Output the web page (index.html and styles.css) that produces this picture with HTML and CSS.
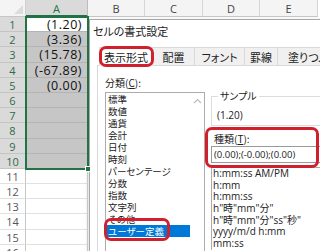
FILE: index.html
```html
<!DOCTYPE html>
<html lang="ja">
<head>
  <meta charset="UTF-8" />
  <title>セルの書式設定</title>
  <link rel="stylesheet" href="styles.css">
</head>
<body>
  <!-- worksheet behind the dialog -->
  <div class="sheet">
    <div class="col heads">
      <div class="corner"></div>
      <div class="rowhead sel">1</div>
      <div class="rowhead sel">2</div>
      <div class="rowhead sel">3</div>
      <div class="rowhead sel">4</div>
      <div class="rowhead sel">5</div>
      <div class="rowhead sel">6</div>
      <div class="rowhead sel">7</div>
      <div class="rowhead sel">8</div>
      <div class="rowhead sel">9</div>
      <div class="rowhead sel">10</div>
      <div class="rowhead">11</div>
      <div class="rowhead">12</div>
      <div class="rowhead">13</div>
      <div class="rowhead">14</div>
      <div class="rowhead">15</div>
      <div class="rowhead">16</div>
    </div>

    <div class="col col-a">
      <div class="colhead sel">A</div>
      <div class="selection">
        <div class="cell active">(1.20)</div>
        <div class="cell">(3.36)</div>
        <div class="cell">(15.78)</div>
        <div class="cell">(-67.89)</div>
        <div class="cell">(0.00)</div>
        <div class="cell"></div>
        <div class="cell"></div>
        <div class="cell"></div>
        <div class="cell"></div>
        <div class="cell"></div>
        <span class="handle"></span>
      </div>
      <div class="cell plain"></div>
      <div class="cell plain"></div>
      <div class="cell plain"></div>
      <div class="cell plain"></div>
      <div class="cell plain"></div>
      <div class="cell plain"></div>
    </div>

    <div class="col col-rest">
      <div class="colheads">
        <div class="colhead w57">B</div>
        <div class="colhead w58">C</div>
        <div class="colhead w57">D</div>
        <div class="colhead w58">E</div>
      </div>
    </div>
  </div>

  <!-- format cells dialog -->
  <div class="dialog">
    <div class="dlg-title">セルの書式設定</div>

    <div class="tabs">
      <div class="tab tab-format active">表示形式</div>
      <div class="tab tab-align">配置</div>
      <div class="tab tab-font">フォント</div>
      <div class="tab tab-border">罫線</div>
      <div class="tab tab-fill">塗りつぶし</div>
    </div>

    <div class="panel">
      <div class="left">
        <div class="label">分類(<u>C</u>):</div>
        <div class="listbox">
          <ul class="categories">
            <li>標準</li>
            <li>数値</li>
            <li>通貨</li>
            <li>会計</li>
            <li>日付</li>
            <li>時刻</li>
            <li>パーセンテージ</li>
            <li>分数</li>
            <li>指数</li>
            <li>文字列</li>
            <li>その他</li>
            <li class="selected">ユーザー定義</li>
          </ul>
          <div class="scrollbar">
            <svg width="9" height="6" viewBox="0 0 9 6"><path d="M1 5 L4.5 1.5 L8 5" fill="none" stroke="#bdbdbd" stroke-width="1.2"/></svg>
          </div>
        </div>
      </div>

      <div class="right">
        <fieldset class="sample">
          <legend>サンプル</legend>
          <div class="sample-value">(1.20)</div>
        </fieldset>
        <div class="label type-label">種類(<u>T</u>):</div>
        <div class="type-input">(0.00);(-0.00);(0.00)</div>
        <ul class="formats">
          <li>h:mm:ss AM/PM</li>
          <li>h:mm</li>
          <li>h:mm:ss</li>
          <li>h"時"mm"分"</li>
          <li>h"時"mm"分"ss"秒"</li>
          <li>yyyy/m/d h:mm</li>
          <li>mm:ss</li>
        </ul>
      </div>
    </div>
  </div>

  <!-- red annotation rings -->
  <div class="ring ring-tab"></div>
  <div class="ring ring-type"></div>
  <div class="ring ring-user"></div>
</body>
</html>
```

FILE: styles.css
```css
* {
  box-sizing: border-box;
  margin: 0;
  padding: 0;
}

body {
  width: 320px;
  height: 251px;
  overflow: hidden;
  position: relative;
  background: #fff;
  font-family: "Noto Sans CJK JP", sans-serif;
  color: #222;
}

/* ---------- worksheet ---------- */

.sheet {
  display: flex;
  font-family: "Open Sans", "Noto Sans CJK JP", sans-serif;
}

.col {
  display: flex;
  flex-direction: column;
  flex-shrink: 0;
}

.heads {
  width: 26px;
}

.col-a {
  width: 62px;
}

.col-rest {
  flex: 1;
  min-width: 0;
  overflow: hidden;
}

.colheads {
  display: flex;
}

.corner {
  height: 17px;
  background: #f4f4f4;
  border-right: 1px solid #d0d0d0;
  border-bottom: 1px solid #c6c6c6;
  position: relative;
}

.corner::after {
  content: "";
  position: absolute;
  right: 2px;
  bottom: 2px;
  border-left: 9px solid transparent;
  border-bottom: 9px solid #dcdcdc;
}

.colhead {
  height: 17px;
  line-height: 17px;
  text-align: center;
  font-size: 11px;
  color: #444;
  background: #f4f4f4;
  border-right: 1px solid #d6d6d6;
  border-bottom: 1px solid #c6c6c6;
  flex-shrink: 0;
}

.colhead.sel {
  background: #dadada;
  color: #217346;
  border-bottom: 2px solid #217346;
  border-right-color: #bdbdbd;
}

.w57 { width: 57px; }
.w58 { width: 58px; }

.rowhead {
  height: 15.2px;
  line-height: 15px;
  text-align: center;
  font-size: 11px;
  color: #555;
  background: #fff;
  border-right: 1px solid #c6c6c6;
  border-bottom: 1px solid #e1e1e1;
}

.rowhead.sel {
  background: #dadada;
  color: #2f6a48;
  border-bottom-color: #c4c4c4;
}

.selection {
  position: relative;
  z-index: 1;
  outline: 2px solid #217346;
  outline-offset: -1px;
}

.cell {
  height: 15.2px;
  line-height: 16px;
  text-align: right;
  padding-right: 5px;
  font-size: 12.5px;
  letter-spacing: 0.5px;
  color: #111;
  background: #c6c6c6;
  border-right: 1px solid #b4b4b4;
  border-bottom: 1px solid #b4b4b4;
  white-space: nowrap;
}

.cell.active {
  background: #fff;
}

.cell.plain {
  background: #fff;
  border-right-color: #d4d4d4;
  border-bottom-color: #e1e1e1;
}

.handle {
  position: absolute;
  right: -3px;
  bottom: -3px;
  width: 6px;
  height: 6px;
  background: #217346;
  border: 1px solid #fff;
}

/* ---------- dialog ---------- */

.dialog {
  position: absolute;
  left: 89px;
  top: 19px;
  width: 270px;
  height: 260px;
  background: #fff;
  border: 1px solid #a8a8a8;
  box-shadow: -1px 1px 4px rgba(0, 0, 0, 0.15);
  font-feature-settings: "palt";
  overflow: hidden;
}

.dlg-title {
  height: 27px;
  padding: 5px 0 0 3px;
  font-size: 11px;
  line-height: 13px;
}

.tabs {
  display: flex;
  margin-left: 9px;
  height: 19px;
}

.tab {
  height: 19px;
  line-height: 18px;
  font-size: 11px;
  text-align: center;
  white-space: nowrap;
  overflow: hidden;
  background: #f0f0f0;
  border: 1px solid #d9d9d9;
  border-left: none;
  flex-shrink: 0;
}

.tab.active {
  background: #fff;
  border-left: 1px solid #d9d9d9;
  border-bottom-color: #fff;
  position: relative;
  z-index: 1;
}

.tab-format { width: 54px; }
.tab-align { width: 42px; }
.tab-font { width: 50px; }
.tab-border { width: 33px; }
.tab-fill { width: 70px; text-align: left; padding-left: 10px; }

.panel {
  display: flex;
  gap: 6px;
  margin: -1px 0 0 7px;
  height: 200px;
  border: 1px solid #d9d9d9;
  padding: 10px 0 0 7px;
}

.label {
  font-size: 10px;
  line-height: 13px;
  height: 13px;
}

.left {
  width: 100px;
  flex-shrink: 0;
}

.listbox {
  margin-top: 3px;
  height: 180px;
  border: 1px solid #acacac;
  display: flex;
}

.categories {
  list-style: none;
  flex: 1;
  font-size: 9.5px;
  line-height: 12px;
}

.categories li {
  padding-left: 2px;
  height: 12px;
  white-space: nowrap;
}

.categories li.selected {
  background: #0078d7;
  color: #fff;
}

.scrollbar {
  width: 14px;
  display: flex;
  justify-content: center;
  padding-top: 5px;
}

.right {
  flex: 1;
}

.sample {
  margin-top: 14px;
  border: 1px solid #dcdcdc;
  padding: 0 0 4px 5px;
}

.sample legend {
  font-size: 10px;
  line-height: 12px;
  padding: 0 2px;
  margin-left: 1px;
}

.sample-value {
  margin-top: 7px;
  font-size: 10px;
  line-height: 12px;
  font-family: "Open Sans", "Noto Sans CJK JP", sans-serif;
}

.type-label {
  margin: 6px 0 0 3px;
}

.type-input {
  margin-top: 1px;
  height: 17px;
  border: 1px solid #9a9a9a;
  padding-left: 2px;
  font-family: "Open Sans", "Noto Sans CJK JP", sans-serif;
  font-size: 9.5px;
  line-height: 15px;
  white-space: nowrap;
}

.formats {
  list-style: none;
  margin-top: 4px;
  border-left: 1px solid #acacac;
  border-top: 1px solid #acacac;
  padding-left: 1px;
  font-family: "Open Sans", "Noto Sans CJK JP", sans-serif;
  font-size: 10px;
  line-height: 11.7px;
}

.formats li {
  height: 11.7px;
  white-space: nowrap;
}

/* ---------- annotations ---------- */

.ring {
  position: absolute;
  border: 3px solid #d0202e;
  border-radius: 7px;
  z-index: 5;
}

.ring-tab {
  left: 99px;
  top: 46px;
  width: 55px;
  height: 21px;
}

.ring-type {
  left: 205px;
  top: 127px;
  width: 114px;
  height: 41px;
}

.ring-user {
  left: 104px;
  top: 218px;
  width: 66px;
  height: 23px;
}
```
